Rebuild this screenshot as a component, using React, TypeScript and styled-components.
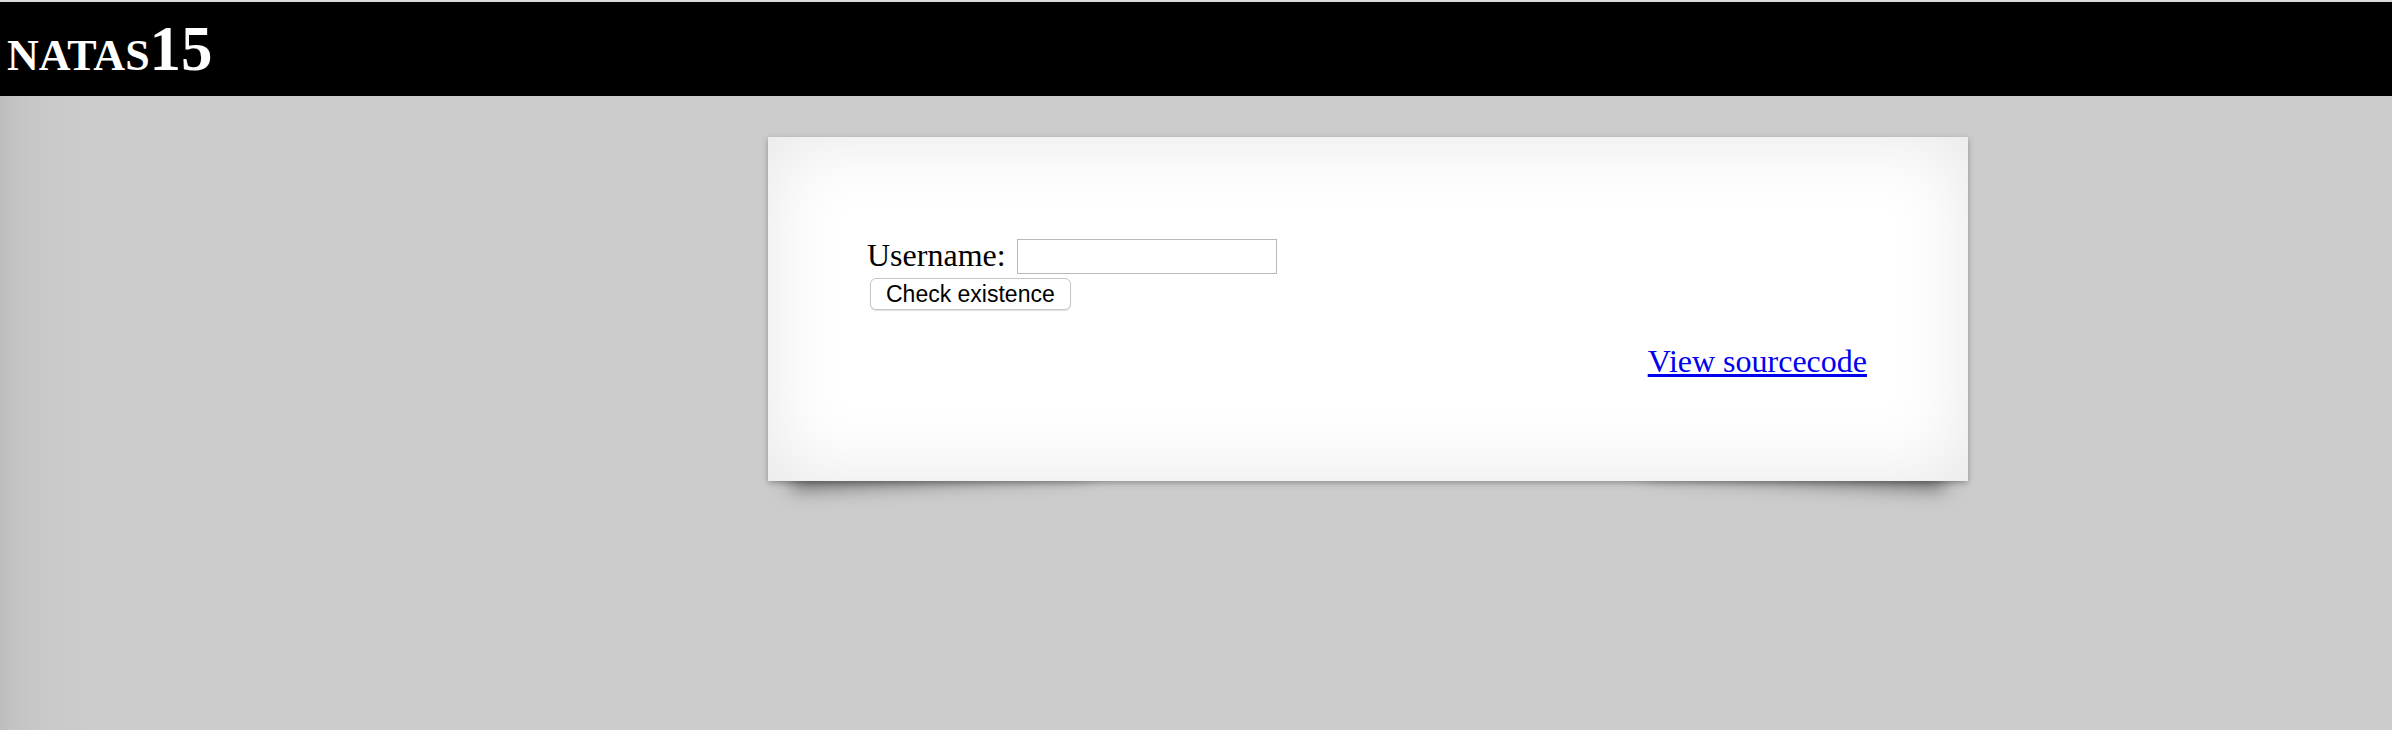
import React from 'react'
import styled, { createGlobalStyle } from 'styled-components'

const GlobalStyle = createGlobalStyle`
  html, body {
    margin: 0;
    padding: 0;
    background: #ccc;
  }
`

const Page = styled.div`
  min-height: 100vh;
  isolation: isolate;
  border-top: 2px solid #dcdcdc;
  box-sizing: border-box;
  background: linear-gradient(to right, #bdbdbd 0, #c3c3c3 12px, #c8c8c8 40px, #cbcbcb 70px, #cccccc 90px);
`

const Header = styled.h1`
  margin: 0;
  height: 94px;
  box-sizing: border-box;
  padding: 15px 7px 0;
  background: #000;
  color: #fff;
  font-family: 'Liberation Serif', 'Times New Roman', serif;
  font-weight: bold;
  font-variant: small-caps;
  font-size: 63px;
  line-height: 64px;
`

const Main = styled.main`
  padding: 41px 0 200px 768px;
`

const Content = styled.div`
  position: relative;
  width: 1200px;
  box-sizing: border-box;
  padding: 99px 101px 101px 99px;
  background: #fff;
  font-family: 'Liberation Serif', 'Times New Roman', serif;
  font-size: 32px;
  line-height: 37px;
  color: #000;
  box-shadow: 0 2px 6px rgba(0, 0, 0, 0.3), 0 0 80px rgba(0, 0, 0, 0.1) inset;

  &::before,
  &::after {
    content: '';
    position: absolute;
    z-index: -2;
    bottom: 30px;
    left: 20px;
    width: 50%;
    height: 20%;
    max-width: 300px;
    max-height: 200px;
    box-shadow: 0 30px 20px rgba(0, 0, 0, 0.5);
    transform: rotate(-3deg);
  }

  &::after {
    right: 20px;
    left: auto;
    transform: rotate(3deg);
  }
`

const Form = styled.form`
  display: flex;
  flex-direction: column;
  align-items: flex-start;
  margin: 0 0 33px;
`

const Row = styled.div`
  display: flex;
  align-items: center;
  gap: 11px;
`

const TextInput = styled.input`
  width: 260px;
  height: 35px;
  margin: 3px 0 0;
  box-sizing: border-box;
  border: 1px solid #b9b9b9;
  background: #fff;
  padding: 0 6px;
  font-size: 20px;
`

const SubmitButton = styled.button`
  margin: 4px 0 0 3px;
  height: 32px;
  padding: 0 15px;
  box-sizing: border-box;
  border: 1px solid #c6c6c6;
  border-radius: 6px;
  background: #fff;
  box-shadow: 0 1px 1px rgba(0, 0, 0, 0.12);
  font-family: 'Liberation Sans', Arial, sans-serif;
  font-size: 23px;
  line-height: 28px;
  color: #000;
`

const ViewSource = styled.div`
  text-align: right;
`

const SourceLink = styled.a`
  color: #0000ee;
  text-decoration: underline;
`

export default function App() {
  return (
    <>
      <GlobalStyle />
      <Page>
        <Header>natas15</Header>
        <Main>
          <Content>
            <Form onSubmit={(e) => e.preventDefault()}>
              <Row>
                <span>Username:</span>
                <TextInput name="username" />
              </Row>
              <SubmitButton type="submit">Check existence</SubmitButton>
            </Form>
            <ViewSource>
              <SourceLink href="#">View sourcecode</SourceLink>
            </ViewSource>
          </Content>
        </Main>
      </Page>
    </>
  )
}
